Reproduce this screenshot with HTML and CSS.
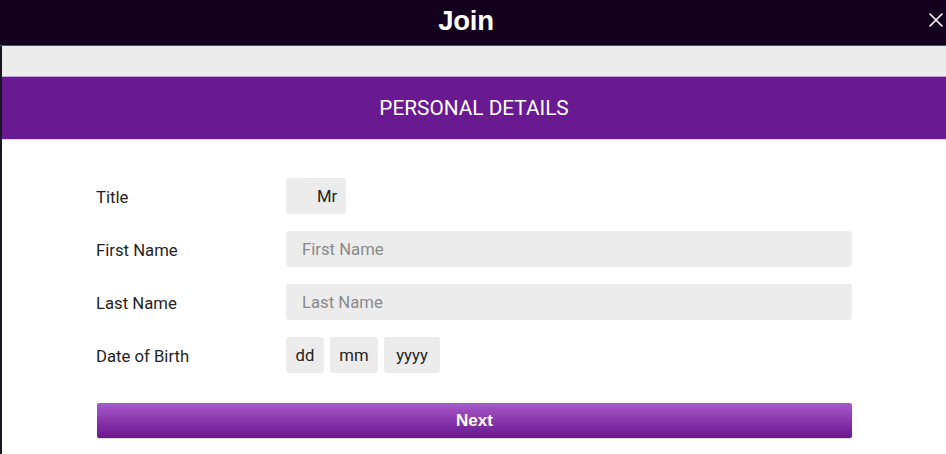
FILE: index.html
```html
<!DOCTYPE html>
<html>
<head>
<meta charset="utf-8">
<link rel="stylesheet" href="styles.css">
</head>
<body>
<div class="modal">
  <header class="topbar">
    <h1 class="topbar-title">Join</h1>
    <span class="close" aria-label="Close">
      <svg width="14" height="14" viewBox="0 0 14 14"><path d="M1 1 L13 13 M13 1 L1 13" stroke="#ffffff" stroke-width="1.6" stroke-linecap="round"/></svg>
    </span>
  </header>
  <div class="body">
    <div class="grey-band"></div>
    <div class="section-title">PERSONAL DETAILS</div>
    <form class="form">
      <div class="row">
        <label class="label">Title</label>
        <div class="field"><span class="select">Mr</span></div>
      </div>
      <div class="row">
        <label class="label">First Name</label>
        <div class="field"><span class="input placeholder">First Name</span></div>
      </div>
      <div class="row">
        <label class="label">Last Name</label>
        <div class="field"><span class="input placeholder">Last Name</span></div>
      </div>
      <div class="row">
        <label class="label">Date of Birth</label>
        <div class="field dob">
          <span class="box box-dd">dd</span>
          <span class="box box-mm">mm</span>
          <span class="box box-yyyy">yyyy</span>
        </div>
      </div>
      <div class="actions">
        <span class="next">Next</span>
      </div>
    </form>
  </div>
</div>
</body>
</html>
```
FILE: styles.css
```css
html, body {
  margin: 0;
  padding: 0;
  background: #ffffff;
}
body {
  width: 946px;
  height: 454px;
  overflow: hidden;
  font-family: Roboto, "Liberation Sans", sans-serif;
}
.modal {
  display: flex;
  flex-direction: column;
  height: 454px;
}
.topbar {
  position: relative;
  height: 46px;
  background: #13011f;
  display: flex;
  align-items: center;
  justify-content: center;
  border-bottom: 1px solid #6c3a88;
  box-sizing: border-box;
}
.topbar-title {
  margin: 0 0 4px 0;
  color: #ffffff;
  font-family: "Liberation Sans", Arial, sans-serif;
  font-weight: bold;
  font-size: 27.5px;
  letter-spacing: -0.3px;
  line-height: 1;
  transform: translateX(-7px);
}
.close {
  position: absolute;
  right: 3px;
  top: 13px;
  width: 14px;
  height: 14px;
  display: flex;
}
.body {
  flex: 1;
  border-left: 2px solid #1b1422;
  display: flex;
  flex-direction: column;
}
.grey-band {
  height: 30px;
  background: #ececec;
  border-bottom: 1px solid #c4a6d4;
}
.section-title {
  height: 62px;
  background: #691a91;
  color: #ffffff;
  font-size: 20.8px;
  display: flex;
  align-items: center;
  justify-content: center;
  border-bottom: 1px solid #e5d6ec;
}
.form {
  padding: 38px 94px 0 94px;
  display: flex;
  flex-direction: column;
  gap: 17px;
}
.row {
  display: flex;
  align-items: center;
  height: 36px;
}
.label {
  width: 190px;
  flex: none;
  font-size: 16.7px;
  color: #1f1f1f;
  padding-top: 2px;
}
.field {
  flex: 1;
  display: flex;
  height: 36px;
}
.select, .input, .box {
  background: #ececec;
  border-radius: 3px;
  height: 36px;
  display: flex;
  align-items: center;
  font-size: 16.7px;
  color: #222222;
  box-sizing: border-box;
}
.select {
  width: 60px;
  padding-left: 31px;
}
.input {
  flex: 1;
  padding-left: 16px;
}
.placeholder {
  color: #8a8a8a;
}
.dob {
  gap: 6px;
}
.box {
  justify-content: center;
}
.box-dd { width: 38px; }
.box-mm { width: 48px; }
.box-yyyy { width: 56px; }
.actions {
  margin-top: 13px;
  padding-left: 1px;
}
.next {
  height: 35px;
  display: flex;
  align-items: center;
  justify-content: center;
  background: linear-gradient(to bottom, #a95acb 0%, #8a37ad 50%, #681690 100%);
  border-radius: 2px;
  color: #ffffff;
  font-family: "Liberation Sans", Arial, sans-serif;
  font-weight: bold;
  font-size: 17px;
  box-shadow: 0 1px 1px rgba(0,0,0,0.15);
}
```
